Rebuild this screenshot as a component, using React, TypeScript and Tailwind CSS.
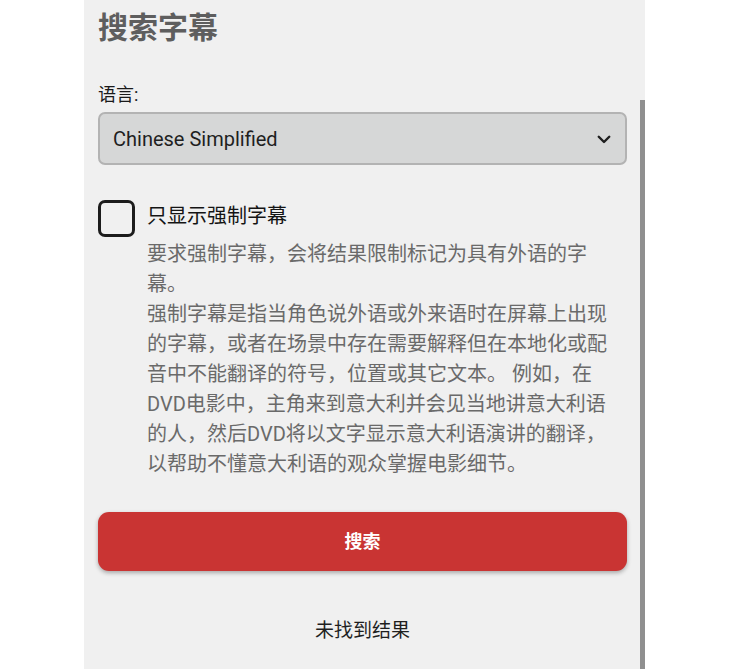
import React from "react";

export default function App() {
  const font = { fontFamily: '"Roboto", "Noto Sans CJK SC", sans-serif' };
  return (
    <div className="w-[745px] h-[669px] overflow-hidden bg-white flex" style={font}>
      <div className="ml-[84px] w-[561px] h-[669px] bg-[#f0f0f0] flex">
        <div className="w-[556px] pl-[14px] pr-[13px] pt-[8px] flex flex-col">
          <h1 className="text-[30px] leading-[40px] font-bold text-[#5e5e5e]">搜索字幕</h1>
          <div className="mt-[34px] text-[18px] leading-[26px] text-[#1a1a1a]">语言:</div>
          <div className="mt-[4px] h-[53px] rounded-[7px] border-2 border-[#b3b3b3] bg-[#d6d7d7] flex items-center justify-between pl-[13px] pr-[12px]">
            <span className="text-[20px] text-[#1f1f1f]">Chinese Simplified</span>
            <svg width="18" height="18" viewBox="0 0 24 24" fill="none" stroke="#1f1f1f" strokeWidth="3.2" strokeLinecap="round" strokeLinejoin="round">
              <path d="M5 9l7 7 7-7" />
            </svg>
          </div>
          <div className="mt-[35px] flex gap-[12px]">
            <div className="w-[37px] h-[37px] shrink-0 rounded-[7px] border-[3px] border-[#1c1c1c]"></div>
            <div className="flex flex-col">
              <div className="text-[20px] leading-[30px] text-[#141414] mt-[1px]">只显示强制字幕</div>
              <div className="mt-[8px] w-[470px] text-[20px] leading-[30px] text-[#6a6a6a]">
                <p>要求强制字幕，会将结果限制标记为具有外语的字幕。</p>
                <p>强制字幕是指当角色说外语或外来语时在屏幕上出现的字幕，或者在场景中存在需要解释但在本地化或配音中不能翻译的符号，位置或其它文本。 例如，在DVD电影中，主角来到意大利并会见当地讲意大利语的人，然后DVD将以文字显示意大利语演讲的翻译，以帮助不懂意大利语的观众掌握电影细节。</p>
              </div>
            </div>
          </div>
          <button className="mt-[33px] h-[59px] w-full rounded-[11px] bg-[#c93433] text-white text-[18px] font-bold shadow-[0_2px_4px_rgba(0,0,0,0.3)] flex items-center justify-center">
            搜索
          </button>
          <div className="mt-[45px] text-center text-[19px] leading-[30px] text-[#1f1f1f]">未找到结果</div>
        </div>
        <div className="w-[5px] flex flex-col">
          <div className="mt-[100px] flex-1 bg-[#8f8f8f]"></div>
        </div>
      </div>
    </div>
  );
}
